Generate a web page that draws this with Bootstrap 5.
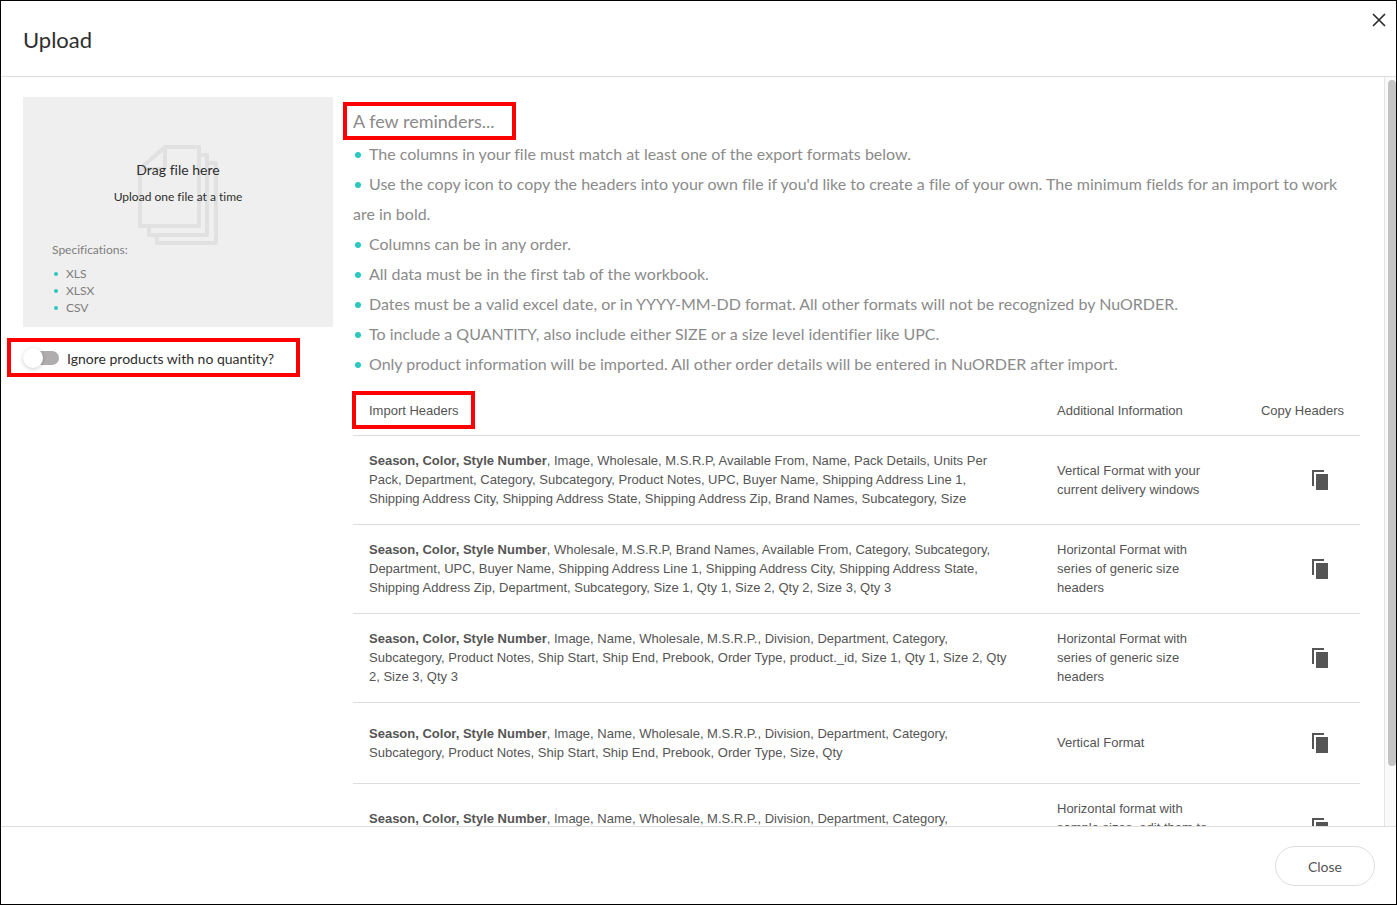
<!DOCTYPE html>
<html lang="en">
<head>
<meta charset="utf-8">
<meta name="viewport" content="width=device-width, initial-scale=1">
<title>Upload</title>
<link href="https://cdn.jsdelivr.net/npm/bootstrap@5.3.0/dist/css/bootstrap.min.css" rel="stylesheet">
<style>
  body { font-family: Lato, "Liberation Sans", sans-serif; font-variant-ligatures: none; color: #2e2e2e; }
  .upload-dialog { border: 1px solid #000; }
  .rule-bottom { border-bottom: 1px solid #dedede; }
  .rule-top { border-top: 1px solid #dedede; }
  .dialog-head { padding: 22px 7px 22px 22px; height: 76px; }
  .dialog-title { font-size: 22px; line-height: 34px; font-weight: 400; }
  .dismiss { width: 20px; height: 20px; margin-top: -13px; color: #2e2e2e; }
  .dialog-body { min-height: 0; }
  .dialog-scroll { overflow-y: auto; scrollbar-width: none; min-width: 0; padding: 20px 24px 20px 22px; gap: 20px; }
  .dialog-scroll::-webkit-scrollbar { display: none; }
  .scroll-rail { width: 12px; background: #fafafa; border-left: 1px solid #e4e4e4; padding: 3px 0 0 3px; }
  .scroll-thumb { height: 92%; background: #c4c4c4; border-radius: 4px; }
  .side { width: 310px; }
  .drop-zone { height: 230px; background: #efefef; padding: 61px 29px 9px; }
  .drop-zone > svg { left: 115px; top: 48px; }
  .drop-title { font-size: 14px; line-height: 24px; }
  .drop-note { font-size: 12px; line-height: 30px; }
  .specs { font-size: 12px; line-height: 17px; color: #7d7d7d; margin-top: 29px; }
  .teal-list { list-style: none; padding: 0; margin: 0; }
  .teal-list li::before { content: ""; display: inline-block; width: 6px; height: 6px; border-radius: 50%; background: #2ac8bd; margin: 0 8px 2px 2px; vertical-align: middle; }
  .specs .teal-list { margin-top: 7px; }
  .specs .teal-list li::before { width: 4px; height: 4px; margin-bottom: 1px; }
  .marked { position: relative; }
  .marked::after { content: ""; position: absolute; border: 4px solid #f00; pointer-events: none; }
  .mark-switch { margin-top: 21px; }
  .mark-switch::after { inset: -10px auto -9px -16px; width: 293px; }
  .mark-title::after { inset: -4px -22px -4px -10px; }
  .mark-head::after { inset: -10px -16px -9px -17px; }
  .form-switch.quiet { padding: 0; min-height: 0; gap: 7px; font-size: 14px; line-height: 18px; }
  .quiet .form-check-label { padding-top: 2px; }
  .quiet .form-check-input { float: none; margin: 0; width: 37px; height: 20px; border: 0; background: none; position: relative; box-shadow: none; }
  .quiet .form-check-input::before { content: ""; position: absolute; inset: 3px 1px 3px 8px; border-radius: 7px; background: #afadad; }
  .quiet .form-check-input::after { content: ""; position: absolute; width: 20px; height: 20px; left: 0; top: 0; border-radius: 50%; background: #fff; box-shadow: 0 1px 4px rgba(0,0,0,.2); }
  .main-col { min-width: 0; color: #8b8b8b; }
  .reminder-title { font-size: 18px; line-height: 30px; margin: 9px 0 3px; font-weight: 400; }
  .reminders { font-size: 16px; line-height: 30px; }
  .formats { font-family: "Liberation Sans", Arial, sans-serif; font-size: 13px; line-height: 19px; color: #555; table-layout: fixed; margin: 7px 0 0; }
  .formats th, .formats td { padding: 15px 16px 16px; vertical-align: middle; text-align: left; font-weight: 400; border-bottom: 1px solid #dedede; }
  .formats th { padding: 15px 16px; }
  .formats td { height: 81px; }
  .formats td:nth-child(1) { padding-right: 30px; }
  .formats td:nth-child(2) { padding-right: 26px; }
  .formats b { font-weight: 700; }
  .formats .col-info { width: 202px; }
  .formats .col-copy { width: 117px; }
  .formats .end { text-align: right; }
  .copy-btn { margin-right: 15px; color: #555; }
  .dialog-foot { height: 78px; padding: 0 21px; }
  .btn-round { width: 100px; height: 40px; border: 1px solid #dedede; border-radius: 20px; font-size: 14px; color: #555; }
  .btn-round.btn { padding: 2px 0 0; }
</style>
</head>
<body>
<svg class="d-none" aria-hidden="true">
  <symbol id="copy-glyph" viewBox="0 0 17 20"><path d="M0 0h12v2H2v14H0zM4 4h12v16H4z" fill="currentColor"/></symbol>
</svg>
<div class="upload-dialog vh-100 d-flex flex-column bg-white" role="dialog" aria-labelledby="dialog-title">
  <header class="dialog-head rule-bottom d-flex justify-content-between align-items-start flex-shrink-0">
    <h1 class="dialog-title m-0" id="dialog-title">Upload</h1>
    <button type="button" class="dismiss btn p-0 border-0 d-flex align-items-center justify-content-center" aria-label="Close dialog">
      <svg width="14" height="14" viewBox="0 0 14 14" fill="none" stroke="currentColor" stroke-width="1.7"><path d="M1 1l12 12M13 1L1 13"/></svg>
    </button>
  </header>

  <div class="dialog-body d-flex flex-grow-1">
    <div class="dialog-scroll d-flex align-items-start flex-grow-1">
      <aside class="side flex-shrink-0">
        <div class="drop-zone position-relative">
          <svg class="position-absolute" width="82" height="101" viewBox="0 0 82 101" fill="none" stroke="#e1e1e1" stroke-width="4" stroke-linejoin="round">
            <path d="M2 24L27 2H61V81H2zM27 2V24H2"/>
            <path d="M62 10H69V90H11V82M70 18H78V98H19V91"/>
          </svg>
          <div class="position-relative">
            <div class="drop-title text-center">Drag file here</div>
            <div class="drop-note text-center">Upload one file at a time</div>
            <div class="specs">Specifications:
              <ul class="teal-list"><li>XLS</li><li>XLSX</li><li>CSV</li></ul>
            </div>
          </div>
        </div>
        <div class="mark-switch marked">
          <div class="form-check form-switch quiet d-flex align-items-center m-0">
            <input class="form-check-input" type="checkbox" role="switch" id="ignore-empty">
            <label class="form-check-label" for="ignore-empty">Ignore products with no quantity?</label>
          </div>
        </div>
      </aside>

      <main class="main-col flex-grow-1">
        <h2 class="reminder-title"><span class="marked mark-title d-inline-block">A few reminders...</span></h2>
        <ul class="reminders teal-list">
          <li>The columns in your file must match at least one of the export formats below.</li>
          <li>Use the copy icon to copy the headers into your own file if you'd like to create a file of your own. The minimum fields for an import to work are in bold.</li>
          <li>Columns can be in any order.</li>
          <li>All data must be in the first tab of the workbook.</li>
          <li>Dates must be a valid excel date, or in YYYY-MM-DD format. All other formats will not be recognized by NuORDER.</li>
          <li>To include a QUANTITY, also include either SIZE or a size level identifier like UPC.</li>
          <li>Only product information will be imported. All other order details will be entered in NuORDER after import.</li>
        </ul>
        <table class="formats w-100">
          <colgroup><col><col class="col-info"><col class="col-copy"></colgroup>
          <thead>
            <tr><th scope="col"><span class="marked mark-head d-inline-block">Import Headers</span></th><th scope="col">Additional Information</th><th scope="col" class="end text-nowrap">Copy Headers</th></tr>
          </thead>
          <tbody>
            <tr>
              <td><b>Season, Color, Style Number</b>, Image, Wholesale, M.S.R.P, Available From, Name, Pack Details, Units Per Pack, Department, Category, Subcategory, Product Notes, UPC, Buyer Name, Shipping Address Line 1, Shipping Address City, Shipping Address State, Shipping Address Zip, Brand Names, Subcategory, Size</td>
              <td>Vertical Format with your current delivery windows</td>
              <td class="end"><button type="button" class="copy-btn btn p-0 border-0 lh-1" aria-label="Copy headers"><svg width="17" height="20"><use href="#copy-glyph"/></svg></button></td>
            </tr>
            <tr>
              <td><b>Season, Color, Style Number</b>, Wholesale, M.S.R.P, Brand Names, Available From, Category, Subcategory, Department, UPC, Buyer Name, Shipping Address Line 1, Shipping Address City, Shipping Address State, Shipping Address Zip, Department, Subcategory, Size 1, Qty 1, Size 2, Qty 2, Size 3, Qty 3</td>
              <td>Horizontal Format with series of generic size headers</td>
              <td class="end"><button type="button" class="copy-btn btn p-0 border-0 lh-1" aria-label="Copy headers"><svg width="17" height="20"><use href="#copy-glyph"/></svg></button></td>
            </tr>
            <tr>
              <td><b>Season, Color, Style Number</b>, Image, Name, Wholesale, M.S.R.P., Division, Department, Category, Subcategory, Product Notes, Ship Start, Ship End, Prebook, Order Type, product._id, Size 1, Qty 1, Size 2, Qty 2, Size 3, Qty 3</td>
              <td>Horizontal Format with series of generic size headers</td>
              <td class="end"><button type="button" class="copy-btn btn p-0 border-0 lh-1" aria-label="Copy headers"><svg width="17" height="20"><use href="#copy-glyph"/></svg></button></td>
            </tr>
            <tr>
              <td><b>Season, Color, Style Number</b>, Image, Name, Wholesale, M.S.R.P., Division, Department, Category, Subcategory, Product Notes, Ship Start, Ship End, Prebook, Order Type, Size, Qty</td>
              <td>Vertical Format</td>
              <td class="end"><button type="button" class="copy-btn btn p-0 border-0 lh-1" aria-label="Copy headers"><svg width="17" height="20"><use href="#copy-glyph"/></svg></button></td>
            </tr>
            <tr>
              <td><b>Season, Color, Style Number</b>, Image, Name, Wholesale, M.S.R.P., Division, Department, Category, Subcategory, Product Notes, Ship Start, Ship End, Prebook, Order Type, Size, Qty</td>
              <td>Horizontal format with sample sizes, edit them to match your sizes</td>
              <td class="end"><button type="button" class="copy-btn btn p-0 border-0 lh-1" aria-label="Copy headers"><svg width="17" height="20"><use href="#copy-glyph"/></svg></button></td>
            </tr>
          </tbody>
        </table>
      </main>
    </div>
    <div class="scroll-rail flex-shrink-0" aria-hidden="true"><div class="scroll-thumb"></div></div>
  </div>

  <footer class="dialog-foot rule-top d-flex justify-content-end align-items-center flex-shrink-0">
    <button type="button" class="btn btn-round">Close</button>
  </footer>
</div>
<script src="https://cdn.jsdelivr.net/npm/bootstrap@5.3.0/dist/js/bootstrap.bundle.min.js"></script>
</body>
</html>
